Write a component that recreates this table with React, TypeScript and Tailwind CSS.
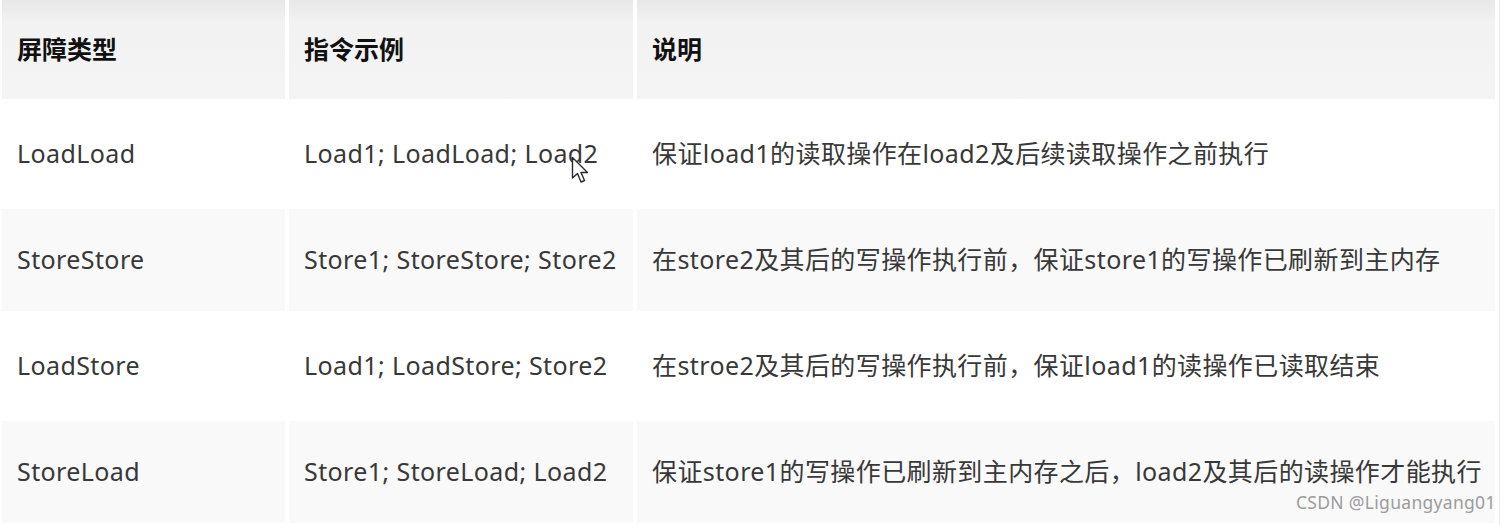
import React from 'react'

const ROWS = [
  ['LoadLoad', 'Load1; LoadLoad; Load2', '保证load1的读取操作在load2及后续读取操作之前执行'],
  ['StoreStore', 'Store1; StoreStore; Store2', '在store2及其后的写操作执行前，保证store1的写操作已刷新到主内存'],
  ['LoadStore', 'Load1; LoadStore; Store2', '在stroe2及其后的写操作执行前，保证load1的读操作已读取结束'],
  ['StoreLoad', 'Store1; StoreLoad; Load2', '保证store1的写操作已刷新到主内存之后，load2及其后的读操作才能执行'],
]

const font = { fontFamily: '"Noto Sans", "Noto Sans CJK SC", sans-serif' }

function Cursor() {
  return (
    <svg width="20" height="30" viewBox="0 0 20 30" className="absolute left-[571px] top-[156px]">
      <path d="M1.5 1.5 L1.5 22 L6.5 17.5 L10 26 L13.5 24.5 L10 16.5 L16.5 16.5 Z"
        fill="#fff" stroke="#2b2b2b" strokeWidth="1.4" strokeLinejoin="round" />
    </svg>
  )
}

export default function App() {
  return (
    <div className="relative w-[1507px] h-[525px] bg-white overflow-hidden" style={font}>
      <div className="flex h-full">
        <div className="grid grid-cols-[283px_344px_858px] auto-rows-[102px] grid-rows-[99px] gap-[4px] pl-[2px] text-[25px] text-[#383838]">
          {['屏障类型', '指令示例', '说明'].map((h) => (
            <div key={h}
              className="flex items-center pl-[15px] font-bold text-[#111] bg-[linear-gradient(to_bottom,#e8e8e8_0px,#f2f2f2_22px,#f4f4f4_100%)]">
              {h}
            </div>
          ))}
          {ROWS.map((r, i) =>
            r.map((c, j) => (
              <div key={`${i}-${j}`}
                className={`flex items-center pl-[15px] whitespace-nowrap tracking-[0.4px] ${i % 2 === 1 ? 'bg-[#f9f9f9]' : 'bg-white'}`}>
                {c}
              </div>
            ))
          )}
        </div>
        <div className="ml-[4px] w-px bg-[#ececec]" />
      </div>
      <Cursor />
      <div className="absolute left-[1296px] top-[494px] text-[17.5px] text-[#9c9c9c] leading-none tracking-[0.3px]">
        CSDN @Liguangyang01
      </div>
    </div>
  )
}
